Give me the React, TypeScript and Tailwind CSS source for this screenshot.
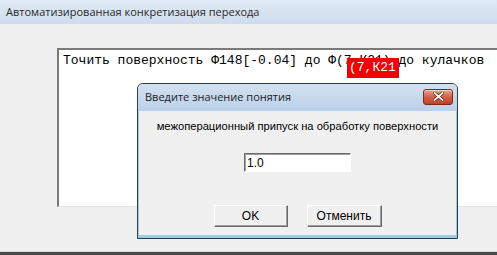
const mono = { fontFamily: '"Liberation Mono", "Courier New", monospace' };

const Button = ({ label, width }: { label: string; width: string }) => (
  <button
    className={`${width} h-[22px] border border-t-white border-l-white border-r-[#696969] border-b-[#696969] bg-[#f0f0f0] text-[12px] leading-none text-black shadow-[inset_-1px_-1px_0_#a0a0a0]`}
    style={{ fontFamily: '"Liberation Sans Narrow", "Liberation Sans", Arial, sans-serif' }}
  >
    {label}
  </button>
);

const PromptDialog = () => (
  <div className="absolute left-[137px] top-[83px] flex h-[156px] w-[321px] flex-col overflow-hidden rounded-t-[6px] border border-[#2c3e52] bg-[#f0f0f0] shadow-[inset_0_0_0_1px_#9cc9e0]">
    <div className="flex h-[27px] shrink-0 items-center justify-between bg-gradient-to-b from-[#d3e1f1] to-[#bcd0e8] pl-[7px] pr-[4px]">
      <span className="text-[11px] text-[#1b1b1b]" style={{ fontFamily: '"Open Sans", "Noto Sans", sans-serif' }}>
        Введите значение понятия
      </span>
      <div className="mb-[2px] flex h-[16px] w-[30px] items-center justify-center rounded-[3px] border border-[#7d2a1c] bg-gradient-to-b from-[#e8a696] via-[#d0614a] to-[#c1402a] shadow-[inset_0_1px_0_#f5cfc4]">
        <svg width="11" height="9" viewBox="0 0 11 9">
          <path d="M1.5 1 L9.5 8 M9.5 1 L1.5 8" stroke="#5a1a10" strokeWidth="3.2" strokeLinecap="square" />
          <path d="M1.5 1 L9.5 8 M9.5 1 L1.5 8" stroke="#ffffff" strokeWidth="1.8" strokeLinecap="square" />
        </svg>
      </div>
    </div>
    <div className="mx-[1px] mb-[1px] flex flex-1 flex-col items-center border-b-2 border-b-[#9cd0e4] pt-[7px]">
      <p className="text-[11.2px] leading-[16px] text-black" style={{ fontFamily: '"Liberation Sans", Arial, sans-serif' }}>
        межоперационный припуск на обработку поверхности
      </p>
      <div
        className="mt-[19px] flex h-[19px] w-[107px] items-center border border-t-[#696969] border-l-[#696969] border-r-white border-b-white bg-white pl-[2px] text-[12px] text-black shadow-[inset_1px_1px_0_#a0a0a0]"
        style={{ fontFamily: '"Liberation Sans", Arial, sans-serif' }}
      >
        1.0
      </div>
      <div className="mt-[33px] flex gap-[19px]">
        <Button label="OK" width="w-[74px]" />
        <Button label="Отменить" width="w-[75px]" />
      </div>
    </div>
  </div>
);

const App = () => {
  return (
    <div className="relative flex h-[255px] w-[497px] flex-col overflow-hidden bg-[#f0f0f0]">
      <div className="flex h-[24px] shrink-0 items-center bg-gradient-to-b from-[#e0e9f5] to-[#cfdcec] pl-[6px]">
        <span className="text-[11px] text-[#2a2a2a]" style={{ fontFamily: '"Open Sans", "Noto Sans", sans-serif' }}>
          Автоматизированная конкретизация перехода
        </span>
      </div>

      <div className="flex-1">
        <div className="ml-[57px] mt-[24px] h-[159px] w-[445px] border-l-2 border-t-2 border-b border-l-[#7a7a7a] border-t-[#7a7a7a] border-b-[#e3e3e3] bg-white pl-[4px] pt-[3px]">
          <p className="whitespace-pre text-[13px] leading-[16px] text-black" style={mono}>
            Точить поверхность Ф148[-0.04] до Ф(7,К21) до кулачков
          </p>
        </div>
      </div>

      <div className="h-[1px] bg-[#d7d7d7]" />
      <div className="h-[3px] bg-[#4b4b4b]" />

      <div
        className="absolute left-[347px] top-[58px] flex h-[20px] w-[52px] items-center bg-[#f00000] pl-[2px] text-[13px] text-white"
        style={mono}
      >
        (7,К21
      </div>

      <PromptDialog />
    </div>
  );
};

export default App;
